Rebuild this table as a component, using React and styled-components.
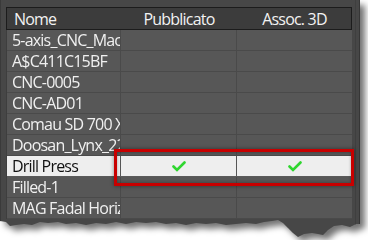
import React from 'react';
import styled, { createGlobalStyle } from 'styled-components';

const GlobalStyle = createGlobalStyle`
  body {
    margin: 0;
    background: #fff;
  }
`;

const rows = [
  { name: '5-axis_CNC_Machine' },
  { name: 'A$C411C15BF' },
  { name: 'CNC-0005' },
  { name: 'CNC-AD01' },
  { name: 'Comau SD 700 XL' },
  { name: 'Doosan_Lynx_220' },
  { name: 'Drill Press', published: true, linked: true, selected: true },
  { name: 'Filled-1' },
  { name: 'MAG Fadal Horizontal' },
];

// ragged bottom edge of the cut-out panel
const tornEdge = [
  [0, 221], [6, 222], [10, 226], [16, 225], [24, 224], [32, 225], [40, 222],
  [48, 223], [58, 222], [66, 224], [76, 223], [86, 225], [96, 223], [106, 224],
  [116, 222], [126, 224], [136, 222], [146, 223], [156, 222], [166, 224],
  [176, 223], [186, 225], [196, 223], [206, 224], [216, 223], [226, 225],
  [236, 224], [246, 223], [256, 224], [264, 222], [272, 221], [278, 220],
  [283, 223], [288, 228], [293, 233], [298, 237], [304, 234], [312, 233],
  [318, 234], [323, 235], [328, 230], [334, 226], [342, 225], [350, 227],
  [356, 224], [360, 224],
];

const clipPolygon = `polygon(0 0, 360px 0, ${tornEdge
  .slice()
  .reverse()
  .map(([x, y]) => `${x}px ${y}px`)
  .join(', ')})`;

const Frame = styled.div`
  position: relative;
  width: 360px;
  filter: drop-shadow(5px 5px 3px rgba(0, 0, 0, 0.55));
`;

const Panel = styled.div`
  position: relative;
  height: 240px;
  box-sizing: border-box;
  padding: 7px 9px 0 6px;
  background: #474747;
  border-left: 1px solid #3a3a3a;
  border-right: 1px solid #363636;
  clip-path: ${clipPolygon};
  font-family: 'Open Sans', 'Liberation Sans', sans-serif;
  font-size: 16px;
  letter-spacing: -0.8px;

  /* thin track line along the right side */
  &::after {
    content: '';
    position: absolute;
    top: 0;
    bottom: 0;
    right: 3px;
    width: 1px;
    background: #3f3f3f;
  }
`;

const Table = styled.div`
  width: 345px;
  margin-left: -1px;
  border-left: 1px solid #3e3e3e;
`;

const Columns = styled.div`
  display: grid;
  grid-template-columns: 114px 116px 115px;
`;

const HeaderRow = styled(Columns)`
  height: 23px;
  box-sizing: border-box;
  margin-left: -1px;
  width: 346px;
  border: 1px solid #1c1c1c;
  background: #3c3c3c;
  color: #f2f2f2;
`;

const HeadCell = styled.div`
  display: flex;
  align-items: center;
  justify-content: ${({ $align }) => ($align === 'left' ? 'flex-start' : 'center')};
  padding-left: ${({ $align }) => ($align === 'left' ? '7px' : '0')};
  white-space: nowrap;
`;

const Row = styled(Columns)`
  height: 21px;
  box-sizing: border-box;
  border-bottom: 1px solid ${({ $selected }) => ($selected ? '#5a5a5a' : '#4a4a4a')};
  background: ${({ $selected }) => ($selected ? '#eeeeee' : '#575757')};
  color: ${({ $selected }) => ($selected ? '#111' : '#f0f0f0')};
`;

const Cell = styled.div`
  display: flex;
  align-items: center;
  justify-content: ${({ $center }) => ($center ? 'center' : 'flex-start')};
  padding-left: ${({ $center }) => ($center ? '0' : '5px')};
  overflow: hidden;
  white-space: nowrap;
  border-right: 1px solid ${({ $selected }) => ($selected ? '#555' : '#4a4a4a')};

  &:last-child {
    border-right: none;
  }
`;

const Highlight = styled.div`
  position: absolute;
  left: 114px;
  top: 149px;
  width: 240px;
  height: 37px;
  box-sizing: border-box;
  border: 3px solid #c80000;
  box-shadow: 0 0 4px rgba(0, 0, 0, 0.45), inset 0 0 3px rgba(0, 0, 0, 0.35);
`;

const Check = () => (
  <svg width="14" height="11" viewBox="0 0 14 11">
    <path
      d="M1.5 5.5 L5 9 L12.5 1.5"
      fill="none"
      stroke="#2fd62f"
      strokeWidth="2.6"
      strokeLinecap="round"
      strokeLinejoin="miter"
    />
  </svg>
);

export default function App() {
  return (
    <>
      <GlobalStyle />
      <Frame>
        <Panel>
          <Table>
            <HeaderRow>
              <HeadCell $align="left">Nome</HeadCell>
              <HeadCell>Pubblicato</HeadCell>
              <HeadCell>Assoc. 3D</HeadCell>
            </HeaderRow>
            {rows.map((r) => (
              <Row key={r.name} $selected={r.selected}>
                <Cell $selected={r.selected}>{r.name}</Cell>
                <Cell $center $selected={r.selected}>{r.published && <Check />}</Cell>
                <Cell $center $selected={r.selected}>{r.linked && <Check />}</Cell>
              </Row>
            ))}
          </Table>
        </Panel>
        <Highlight />
      </Frame>
    </>
  );
}
